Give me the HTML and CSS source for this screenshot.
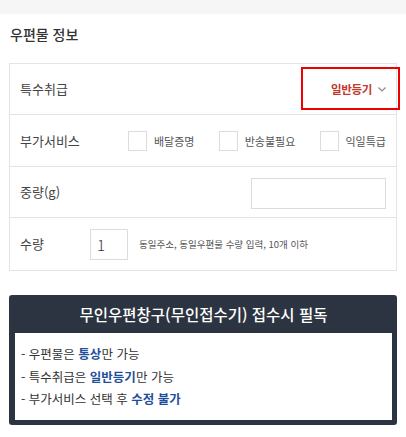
FILE: index.html
```html
<!DOCTYPE html>
<html lang="ko">
<head>
<meta charset="utf-8">
<link rel="stylesheet" href="styles.css">
</head>
<body>
<div class="topbar"></div>
<div class="section">
  <h2 class="title">우편물 정보</h2>
  <div class="card">
    <div class="row row-special">
      <span class="label">특수취급</span>
      <div class="select">
        <span class="select-text">일반등기</span>
        <svg class="chev" width="8" height="5" viewBox="0 0 8 5"><path d="M0.5 0.5 L4 4 L7.5 0.5" fill="none" stroke="#888" stroke-width="1.1"/></svg>
      </div>
      <div class="highlight"></div>
    </div>
    <div class="row row-services">
      <span class="label label-wide">부가서비스</span>
      <div class="checks">
        <label class="check"><span class="box"></span><span class="check-text">배달증명</span></label>
        <label class="check"><span class="box"></span><span class="check-text">반송불필요</span></label>
        <label class="check"><span class="box"></span><span class="check-text">익일특급</span></label>
      </div>
    </div>
    <div class="row row-weight">
      <span class="label">중량(g)</span>
      <div class="input input-weight"></div>
    </div>
    <div class="row row-qty">
      <span class="label label-qty">수량</span>
      <div class="input input-qty">1</div>
      <span class="help">동일주소, 동일우편물 수량 입력, 10개 이하</span>
    </div>
  </div>

  <div class="notice">
    <div class="notice-head">무인우편창구(무인접수기) 접수시 필독</div>
    <div class="notice-body">
      <p>- 우편물은 <b>통상</b>만 가능</p>
      <p>- 특수취급은 <b>일반등기</b>만 가능</p>
      <p>- 부가서비스 선택 후 <b>수정 불가</b></p>
    </div>
  </div>
</div>
</body>
</html>
```

FILE: styles.css
```css
* { box-sizing: border-box; }
html, body { margin: 0; padding: 0; background: #fff; }
body {
  font-family: "Noto Sans CJK KR", "Noto Sans", sans-serif;
  color: #333;
  width: 406px;
  overflow: hidden;
}
.topbar { height: 14px; background: #f6f6f6; }
.section { padding: 0 9px 0 9px; }
.title {
  margin: 0 0 19px 0;
  padding: 10px 0 0 1px;
  font-size: 14px;
  line-height: 20px;
  font-weight: 500;
  color: #333;
}
.card { border: 1px solid #e4e4e4; width: 388px; }
.row {
  display: flex;
  align-items: center;
  padding: 0 10px 0 10px;
  border-bottom: 1px solid #e4e4e4;
  position: relative;
}
.row:last-child { border-bottom: none; }
.row-special { height: 51px; }
.row-services { height: 52px; }
.row-weight { height: 51px; }
.row-qty { height: 52px; }
.label { font-size: 13px; color: #444; line-height: 18px; }
.label-wide { width: 108px; flex: none; }
.label-qty { width: 70px; flex: none; }
.select {
  margin-left: auto;
  display: flex;
  align-items: center;
  gap: 6px;
  padding-right: 0;
}
.select-text { font-size: 11.5px; font-weight: 700; color: #c0392b; letter-spacing: -0.3px; }
.chev { display: block; margin-top: 1px; }
.highlight {
  position: absolute;
  left: 291px;
  top: 3px;
  width: 99px;
  height: 43px;
  border: 2px solid #ee0000;
}
.checks {
  flex: 1;
  display: flex;
  justify-content: space-between;
  align-items: center;
}
.check { display: flex; align-items: center; gap: 7px; }
.box {
  width: 19px;
  height: 20px;
  border: 1px solid #dcdcdc;
  background: #fff;
}
.check-text { font-size: 11px; color: #555; }
.input { border: 1px solid #dcdcdc; background: #fff; height: 31px; }
.input-weight { margin-left: auto; width: 135px; margin-top: 3px; }
.input-qty {
  width: 38px;
  font-size: 15px;
  line-height: 29px;
  padding-left: 6px;
  color: #333;
  font-weight: 300;
}
.help { margin-left: 11px; font-size: 9.5px; color: #555; }
.notice {
  margin-top: 24px;
  width: 388px;
  background: #2b3440;
  border-radius: 3px;
  padding: 0 5px 5px 6px;
}
.notice-head {
  height: 38px;
  line-height: 38px;
  text-align: center;
  color: #fff;
  font-size: 15.5px;
  font-weight: 500;
}
.notice-body {
  background: #fff;
  padding: 10px 0 9px 6px;
}
.notice-body p {
  margin: 0;
  font-size: 12.5px;
  line-height: 22.5px;
  color: #333;
}
.notice-body b { color: #1f4f9b; font-weight: 700; }
```
